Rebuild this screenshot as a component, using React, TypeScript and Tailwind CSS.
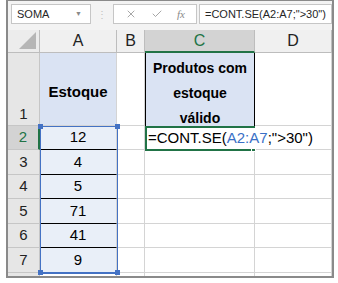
import { X, Check } from "lucide-react";

const rowNums = ["2", "3", "4", "5", "6", "7"];
const stock = ["12", "4", "5", "71", "41", "9"];

export default function App() {
  return (
    <div
      className="w-[338px] h-[283px] bg-white"
      style={{ fontFamily: '"Liberation Sans", Arial, sans-serif' }}
    >
      <div className="ml-[6px] w-[328px] h-[278px] border-2 border-t border-[#8a8a8a] bg-[#f3f3f3] flex flex-col">
        {/* formula bar */}
        <div className="h-[29px] flex items-start pt-[3px] pl-[3px] text-[11px] text-[#262626]">
          <div className="w-[80px] h-[20px] bg-white border border-[#c6c6c6] flex items-center pl-[5px] pr-[8px] justify-between">
            <span>SOMA</span>
            <span className="text-[7px] text-[#8a8a8a]">▼</span>
          </div>
          <div className="w-[22px] h-[20px] flex items-center justify-center text-[#c0c0c0] text-[10px]">⋮</div>
          <div className="w-[84px] h-[20px] bg-white border border-[#c6c6c6] flex items-center justify-around px-[4px] text-[#8a8a8a]">
            <X size={12} strokeWidth={1.5} />
            <Check size={12} strokeWidth={1.5} />
            <span className="italic text-[11px]" style={{ fontFamily: '"Liberation Serif", serif' }}>fx</span>
          </div>
          <div className="ml-[2px] w-[133px] h-[20px] bg-white border border-[#c6c6c6] flex items-center pl-[5px]">
            =CONT.SE(A2:A7;"&gt;30")
          </div>
        </div>

        {/* sheet */}
        <div className="relative grid grid-cols-[32px_77px_28px_110px_77px] grid-rows-[23px_73px_24px_25px_24px_25px_24px_25px_3px] bg-white text-[15px] text-black">
          {/* header row */}
          <div className="bg-[#ececec] border-r border-b border-[#bdbdbd] relative overflow-hidden">
            <div className="absolute right-[3px] bottom-[3px] w-0 h-0 border-l-[17px] border-l-transparent border-b-[17px] border-b-[#b6b6b6]" />
          </div>
          <div className="bg-[#f0f0f0] border-r border-b border-[#bdbdbd] flex items-center justify-center text-[16px] text-[#222]">A</div>
          <div className="bg-[#f0f0f0] border-r border-b border-[#bdbdbd] flex items-center justify-center text-[16px] text-[#222]">B</div>
          <div className="bg-[#d3d3d3] border-r border-[#bdbdbd] border-b-2 border-b-[#217346] flex items-center justify-center text-[16px] text-[#217346]">C</div>
          <div className="bg-[#f0f0f0] border-r border-b border-[#bdbdbd] flex items-center justify-center text-[16px] text-[#222]">D</div>

          {/* row 1 */}
          <div className="bg-[#e6e6e6] border-r border-b border-[#c6c6c6] flex items-end justify-center pb-0 text-[#222]">1</div>
          <div className="bg-[#dae3f3] border-r border-b border-[#d4d4d4] flex items-center justify-center font-bold pt-[6px]">Estoque</div>
          <div className="border-r border-b border-[#d4d4d4]" />
          <div className="bg-[#dae3f3] border-x border-black flex items-center justify-center text-center font-bold text-[14px] leading-[25px] pt-[7px]">
            Produtos com
            <br />
            estoque
            <br />
            válido
          </div>
          <div className="border-r border-b border-[#d4d4d4]" />

          {/* rows 2-7 */}
          {rowNums.map((n, i) => (
            <div key={n} className="contents">
              <div
                className={
                  i === 0
                    ? "bg-[#d3d3d3] border-b border-[#c6c6c6] border-r-2 border-r-[#217346] flex items-center justify-center text-[#217346]"
                    : "bg-[#e6e6e6] border-r border-b border-[#c6c6c6] flex items-center justify-center text-[#222]"
                }
              >
                {n}
              </div>
              <div
                className={
                  "bg-[#e9eff8] flex items-center justify-center border-r border-[#d4d4d4] " +
                  (i < 5 ? "border-b border-b-black" : "border-b border-b-[#d4d4d4]")
                }
              >
                {stock[i]}
              </div>
              <div className="border-r border-b border-[#d4d4d4]" />
              <div className="border-r border-b border-[#d4d4d4]" />
              <div className="border-r border-b border-[#d4d4d4]" />
            </div>
          ))}

          {/* bottom strip */}
          <div className="bg-[#e6e6e6] border-r border-[#c6c6c6]" />
          <div className="border-r border-[#d4d4d4]" />
          <div className="border-r border-[#d4d4d4]" />
          <div className="border-r border-[#d4d4d4]" />
          <div className="border-r border-[#d4d4d4]" />

          {/* range highlight A2:A7 */}
          <div className="absolute left-[32px] top-[96px] w-[78px] h-[148px] border border-[#4472c4] border-b-2 pointer-events-none">
            <div className="absolute -left-[3px] -top-[3px] w-[5px] h-[5px] bg-[#4472c4]" />
            <div className="absolute -right-[3px] -top-[3px] w-[5px] h-[5px] bg-[#4472c4]" />
            <div className="absolute -left-[3px] -bottom-[3px] w-[5px] h-[5px] bg-[#4472c4]" />
            <div className="absolute -right-[3px] -bottom-[3px] w-[5px] h-[5px] bg-[#4472c4]" />
          </div>

          {/* active cell C2 */}
          <div className="absolute left-[137px] top-[96px] w-[110px] h-[25px] border-2 border-[#217346]">
            <div className="absolute -right-[3px] -bottom-[3px] w-[5px] h-[5px] bg-[#217346] border border-white" />
          </div>
          <div className="absolute left-[139px] top-[98px] h-[21px] flex items-center pl-[1px] pr-[2px] bg-white whitespace-nowrap z-10">
            =CONT.SE(<span className="text-[#3a6fc6]">A2:A7</span>;"&gt;30")
          </div>
        </div>
      </div>
    </div>
  );
}
